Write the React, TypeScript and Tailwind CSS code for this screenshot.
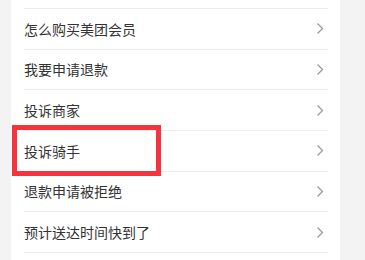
const ITEMS = [
  "怎么购买美团会员",
  "我要申请退款",
  "投诉商家",
  "投诉骑手",
  "退款申请被拒绝",
  "预计送达时间快到了",
];

function Chevron() {
  return (
    <svg width="8" height="13" viewBox="0 0 8 13" fill="none" className="shrink-0">
      <path d="M1.5 1.5 L6.5 6.5 L1.5 11.5" stroke="#9a9a9a" strokeWidth="1.3" />
    </svg>
  );
}

export default function App() {
  return (
    <div
      className="flex h-[260px] w-[365px] overflow-hidden bg-[#f3f3f3]"
      style={{ fontFamily: '"Noto Sans CJK SC", "Noto Sans", sans-serif' }}
    >
      <div className="relative ml-[11px] w-[329px] bg-white pl-[13px] pr-[12px] pt-[8px]">
        {ITEMS.map((item) => (
          <div
            key={item}
            className="flex h-[40.67px] items-center justify-between border-t border-[#ececec] pr-[4px]"
          >
            <span className="text-[14px] leading-none text-[#333333]">{item}</span>
            <Chevron />
          </div>
        ))}
        <div className="border-t border-[#ececec]" />

        {/* highlight annotation */}
        <div className="absolute left-[1px] top-[125px] h-[51px] w-[149px] border-[5px] border-[#f5353d]" />
      </div>
    </div>
  );
}
